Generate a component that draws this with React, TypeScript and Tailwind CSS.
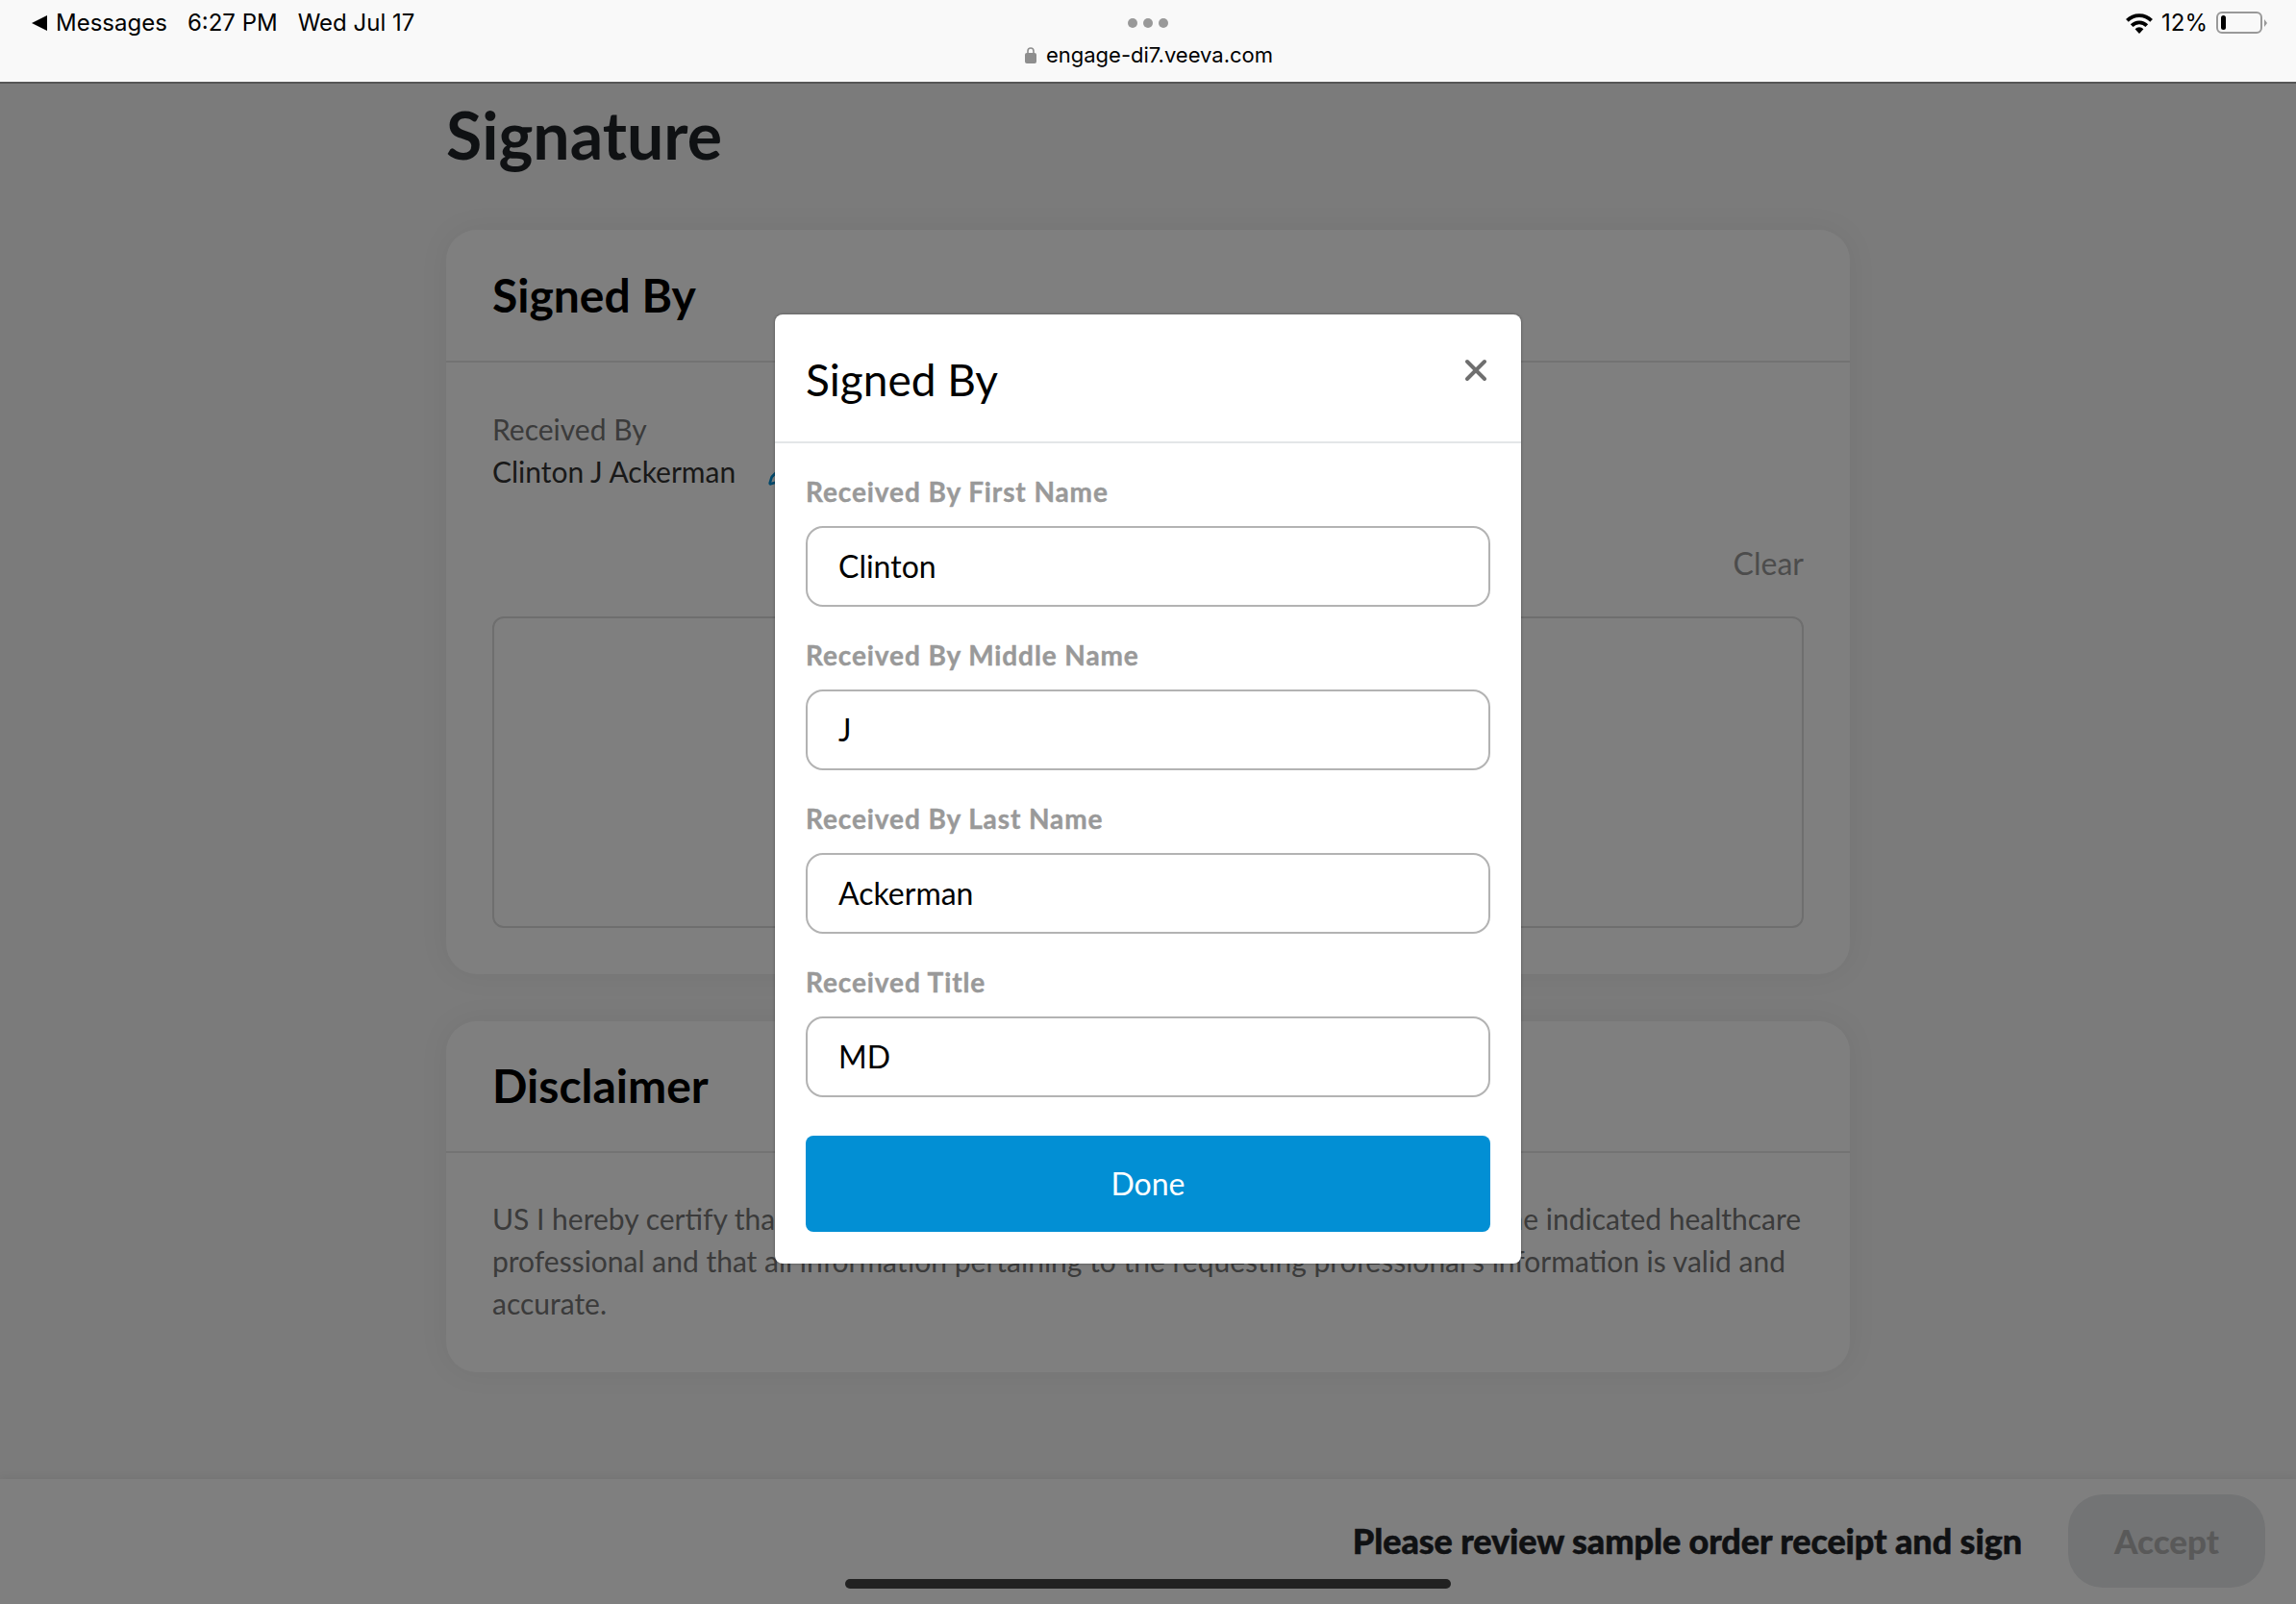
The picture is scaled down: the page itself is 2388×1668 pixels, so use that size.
import { Pencil, X } from "lucide-react";

function StatusBar() {
  return (
    <div className="relative grid h-[87px] shrink-0 grid-cols-3 border-b-2 border-[#555] bg-[#f9f9f9] font-['Inter',sans-serif] text-[24px] text-black">
      <div className="flex items-start gap-[21px] pt-[9px] pl-[33px] leading-[30px]">
        <div className="flex items-center gap-[9px]">
          <svg className="h-[16px] w-[16px]" viewBox="0 0 16 16">
            <path d="M16 0v16L0 8z" fill="#000" />
          </svg>
          <span>Messages</span>
        </div>
        <span>6:27 PM</span>
        <span>Wed Jul 17</span>
      </div>
      <div className="flex flex-col items-center pt-[19px]">
        <div className="flex gap-[6px]">
          <div className="h-[10px] w-[10px] rounded-full bg-[#999]" />
          <div className="h-[10px] w-[10px] rounded-full bg-[#999]" />
          <div className="h-[10px] w-[10px] rounded-full bg-[#999]" />
        </div>
        <div className="mt-[12px] ml-[2px] flex items-center gap-[10px] text-[22px] leading-[32px]">
          <svg className="h-[18px] w-[12px]" viewBox="0 0 12 18">
            <path d="M3 8V5a3 3 0 0 1 6 0v3" fill="none" stroke="#8e8e8e" strokeWidth="1.6" />
            <rect x="0" y="7" width="12" height="11" rx="2" fill="#8e8e8e" />
          </svg>
          <span>engage-di7.veeva.com</span>
        </div>
      </div>
      <div className="flex items-start justify-end gap-[9px] pt-[9px] pr-[30px] leading-[30px]">
        <svg className="mt-[5px] h-[21px] w-[28px]" viewBox="0 0 28 21">
          <path d="M14 21l-4.4-4.8a6.2 6.2 0 0 1 8.8 0z" fill="#000" />
          <path d="M6.2 12.6a11 11 0 0 1 15.6 0" fill="none" stroke="#000" strokeWidth="3.8" />
          <path d="M1.4 7.4a17.8 17.8 0 0 1 25.2 0" fill="none" stroke="#000" strokeWidth="3.8" />
        </svg>
        <span>12%</span>
        <div className="mt-[3px] flex items-center gap-[2px]">
          <div className="flex h-[23px] w-[48px] items-center rounded-[6px] border-2 border-[#999] pl-[3px]">
            <div className="h-[15px] w-[5px] rounded-full bg-black" />
          </div>
          <div className="h-0 w-0 border-y-[4px] border-l-[3px] border-y-transparent border-l-[#999]" />
        </div>
      </div>
    </div>
  );
}

function Field({ label, value }: { label: string; value: string }) {
  return (
    <div className="flex flex-col">
      <div className="h-[64px] pt-[8px] text-[28px] leading-[40px] font-bold tracking-[0.9px] text-[#999] [-webkit-text-stroke:0.4px_#999]">
        {label}
      </div>
      <div className="flex h-[84px] items-center rounded-[18px] border-2 border-[#b3b3b3] px-[32px] text-[32px] text-black">
        {value}
      </div>
    </div>
  );
}

function SignedByModal() {
  return (
    <div className="absolute inset-x-0 top-[87px] bottom-0 flex justify-center bg-black/50 pt-[240px]">
      <div className="flex h-[987px] w-[776px] flex-col rounded-[8px] bg-white shadow-[0_0_3px_rgba(0,0,0,0.4)]">
        <div className="relative flex h-[134px] items-center border-b-2 border-[#e3e6e8] px-[32px] pt-[2px] text-[46px] text-black">
          Signed By
          <X className="absolute top-[40px] right-[29px] h-[36px] w-[36px] text-[#6f6f6f]" strokeWidth={2.6} />
        </div>
        <div className="flex flex-col px-[32px] pt-[22px]">
          <Field label="Received By First Name" value="Clinton" />
          <div className="h-[22px]" />
          <Field label="Received By Middle Name" value="J" />
          <div className="h-[22px]" />
          <Field label="Received By Last Name" value="Ackerman" />
          <div className="h-[22px]" />
          <Field label="Received Title" value="MD" />
          <button className="mt-[40px] h-[100px] rounded-[8px] bg-[#028fd4] text-[32px] text-white">Done</button>
        </div>
      </div>
    </div>
  );
}

export default function App() {
  return (
    <div className="relative flex h-[1668px] w-[2388px] flex-col overflow-hidden bg-[#f6f6f6] font-['Lato',sans-serif]">
      <StatusBar />
      <main className="mx-auto flex w-[1460px] flex-1 flex-col">
        <h1 className="h-[152px] pt-[7px] text-[68px] leading-[92px] font-bold text-[#1f2226]">Signature</h1>
        <section className="flex h-[774px] flex-col rounded-[32px] bg-white shadow-[0_0_32px_rgba(0,0,0,0.06)]">
          <div className="flex h-[138px] items-center border-b-2 border-[#e6e6e6] px-[48px] text-[48px] font-bold text-black">
            Signed By
          </div>
          <div className="flex flex-1 flex-col px-[48px] pt-[47px] text-[30px] leading-[44px]">
            <div className="text-[#767676]">Received By</div>
            <div className="flex items-center gap-[33px] text-[#333]">
              Clinton J Ackerman
              <Pencil className="h-[32px] w-[32px] text-[#0290d6]" />
            </div>
            <div className="mt-[52px] text-right text-[32px] text-[#999]">Clear</div>
            <div className="mt-[33px] h-[324px] rounded-[12px] border-2 border-[#dcdcdc]" />
          </div>
        </section>
        <section className="mt-[49px] flex h-[365px] flex-col rounded-[32px] bg-white shadow-[0_0_32px_rgba(0,0,0,0.06)]">
          <div className="flex h-[137px] items-center border-b-2 border-[#e6e6e6] px-[48px] pb-[2px] text-[48px] font-bold text-black">
            Disclaimer
          </div>
          <p className="px-[48px] pt-[46px] text-[30px] leading-[44px] text-[#767676]">
            US I hereby certify that I have personally received all the samples, requested by the indicated healthcare professional and that all information pertaining to the requesting professional's information is valid and accurate.
          </p>
        </section>
      </main>
      <footer className="flex h-[130px] shrink-0 items-center justify-end gap-[48px] bg-white pr-[32px] pb-[2px] shadow-[0_-2px_8px_rgba(0,0,0,0.06)]">
        <span className="text-[36px] tracking-[-0.1px] font-black text-[#1f2226] [-webkit-text-stroke:0.5px_#1f2226]">Please review sample order receipt and sign</span>
        <button className="h-[97px] w-[205px] rounded-[36px] bg-[#e6e8ea] text-[35px] font-black text-[#b3b3b3]">Accept</button>
      </footer>
      <SignedByModal />
      <div className="absolute bottom-[16px] left-[879px] h-[10px] w-[630px] rounded-full bg-[#222]" />
    </div>
  );
}
